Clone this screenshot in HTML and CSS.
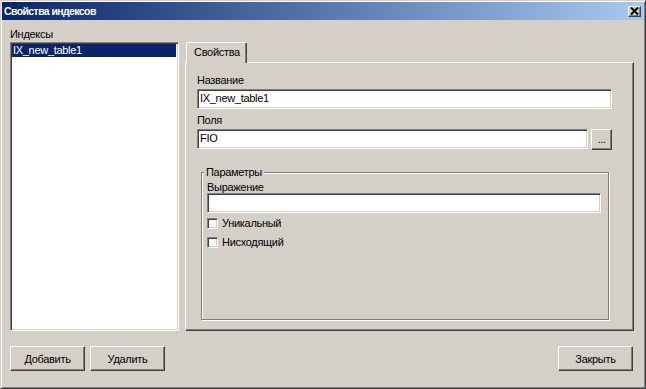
FILE: index.html
```html
<!DOCTYPE html>
<html lang="ru">
<head>
  <meta charset="UTF-8" />
  <title>Свойства индексов</title>
  <link rel="stylesheet" href="styles.css">
</head>
<body>

  <div class="window">
    <div class="titlebar">
      <span class="title">Свойства индексов</span>
      <div class="close-btn">
        <svg width="9" height="8" viewBox="0 0 9 8">
          <path d="M1 0.5 L8 7.5 M8 0.5 L1 7.5" stroke="#000" stroke-width="2"/>
        </svg>
      </div>
    </div>

    <div class="content">
      <div class="main">
        <div class="indexes">
          <div class="label">Индексы</div>
          <div class="listbox">
            <div class="list-item selected">IX_new_table1</div>
          </div>
        </div>

        <div class="tabs">
          <div class="tabstrip">
            <div class="tab active">Свойства</div>
          </div>
          <div class="tabpanel">
            <div class="label">Название</div>
            <div class="edit">IX_new_table1</div>

            <div class="label label-gap">Поля</div>
            <div class="edit-row">
              <div class="edit edit-grow">FIO</div>
              <div class="btn btn-dots">...</div>
            </div>

            <fieldset class="group">
              <legend>Параметры</legend>
              <div class="label label-tight">Выражение</div>
              <div class="edit"></div>
              <div class="check-row first">
                <span class="checkbox"></span>
                <span>Уникальный</span>
              </div>
              <div class="check-row">
                <span class="checkbox"></span>
                <span>Нисходящий</span>
              </div>
            </fieldset>
          </div>
        </div>
      </div>

      <div class="footer">
        <div class="footer-left">
          <div class="btn">Добавить</div>
          <div class="btn">Удалить</div>
        </div>
        <div class="btn btn-close">Закрыть</div>
      </div>
    </div>
  </div>

</body>
</html>
```

FILE: styles.css
```css
* {
  box-sizing: border-box;
}

body {
  margin: 0;
  font-family: "Liberation Sans", Arial, sans-serif;
  font-size: 11px;
  letter-spacing: -0.3px;
  color: #000;
  background: #d4d0c8;
}

.window {
  width: 646px;
  height: 389px;
  display: flex;
  flex-direction: column;
  padding: 1px;
  background: #d4d0c8;
  border: 1px solid;
  border-color: #d4d0c8 #404040 #404040 #d4d0c8;
  box-shadow: inset 1px 1px #fff, inset -1px -1px #808080;
}

/* title bar */
.titlebar {
  height: 18px;
  display: flex;
  align-items: center;
  justify-content: space-between;
  padding: 0 3px 0 2px;
  background: linear-gradient(to right, #0a246a, #a6caf0);
}

.title {
  color: #fff;
  font-weight: bold;
  font-size: 10.5px;
  letter-spacing: -0.6px;
}

.close-btn {
  width: 13px;
  height: 11px;
  display: flex;
  align-items: center;
  justify-content: center;
  background: #d4d0c8;
  border: 1px solid;
  border-color: #fff #404040 #404040 #fff;
  box-shadow: inset -1px -1px #808080;
}

/* body */
.content {
  flex: 1;
  display: flex;
  flex-direction: column;
  padding: 7px 10px 16px 8px;
}

.main {
  height: 304px;
  display: flex;
  gap: 6px;
}

.label {
  line-height: 14px;
  height: 13px;
}

.indexes {
  width: 169px;
  display: flex;
  flex-direction: column;
}

.listbox {
  flex: 1;
  margin-top: 2px;
  padding: 2px;
  background: #fff;
  border: 1px solid;
  border-color: #808080 #fff #fff #808080;
  box-shadow: inset 1px 1px #404040, inset -1px -1px #d4d0c8;
}

.list-item {
  height: 13px;
  line-height: 13px;
  padding-left: 1px;
  margin: -1px 0 0 -1px;
}

.list-item.selected {
  background: #0a246a;
  color: #fff;
}

/* tabs */
.tabs {
  flex: 1;
  display: flex;
  flex-direction: column;
  padding-top: 15px;
}

.tabstrip {
  display: flex;
}

.tab {
  position: relative;
  z-index: 1;
  height: 21px;
  margin: 0 0 -1px 1px;
  padding: 3px 6px 0 7px;
  background: #d4d0c8;
  border: 1px solid;
  border-bottom: none;
  border-color: #fff #404040 transparent #fff;
  border-radius: 2px 2px 0 0;
  box-shadow: inset -1px 0 #808080;
}

.tabpanel {
  flex: 1;
  display: flex;
  flex-direction: column;
  padding: 10px 21px 10px 11px;
  border: 1px solid;
  border-color: #fff #404040 #404040 #fff;
  box-shadow: inset -1px -1px #808080;
}

.label-gap {
  margin-top: 4px;
}

.tabpanel > .label {
  margin-bottom: 3px;
}

.edit {
  height: 20px;
  line-height: 17px;
  padding: 0 2px 0 1px;
  background: #fff;
  border: 1px solid;
  border-color: #808080 #fff #fff #808080;
  box-shadow: inset 1px 1px #404040, inset -1px -1px #d4d0c8;
  padding-left: 2px;
}

.edit-row {
  display: flex;
  gap: 3px;
  height: 21px;
}

.edit-grow {
  flex: 1;
}

.btn {
  height: 25px;
  width: 75px;
  display: flex;
  align-items: center;
  justify-content: center;
  background: #d4d0c8;
  border: 1px solid;
  border-color: #fff #404040 #404040 #fff;
  box-shadow: inset -1px -1px #808080;
}

.btn-dots {
  width: 21px;
  height: 21px;
  padding-bottom: 2px;
  letter-spacing: -0.5px;
}

/* group box */
.group {
  flex: 1;
  margin: 16px 3px 0 4px;
  padding: 0 7px 0 5px;
  min-width: 0;
  border: 1px solid #808080;
  box-shadow: inset 1px 1px #fff, 1px 1px #fff;
}

.group legend {
  padding: 0 2px;
  margin-left: -3px;
  line-height: 13px;
  background: #d4d0c8;
}

.label-tight {
  margin-top: 1px;
}

.check-row {
  height: 18px;
  display: flex;
  align-items: center;
  margin-top: 1px;
}

.checkbox {
  width: 11px;
  height: 11px;
  margin-right: 4px;
  background: #fff;
  border: 1px solid;
  border-color: #808080 #fff #fff #808080;
  box-shadow: inset 1px 1px #404040, inset -1px -1px #d4d0c8;
}

/* footer */
.footer {
  margin-top: 15px;
  display: flex;
  justify-content: space-between;
}

.footer-left {
  display: flex;
  gap: 5px;
}

.btn-close {
  margin-right: 1px;
}
```
